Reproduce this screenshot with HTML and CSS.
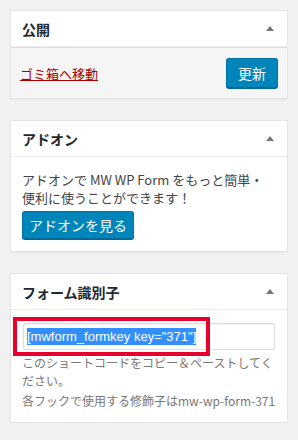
FILE: index.html
```html
<!DOCTYPE html>
<html lang="ja">
<head>
<meta charset="utf-8">
<link rel="stylesheet" href="styles.css">
</head>
<body>
<div class="column">
  <div class="postbox">
    <div class="hndle"><h2>公開</h2><span class="toggle"></span></div>
    <div class="publish-actions">
      <a class="trash" href="#">ゴミ箱へ移動</a>
      <button class="btn btn-update">更新</button>
    </div>
  </div>

  <div class="postbox">
    <div class="hndle"><h2>アドオン</h2><span class="toggle"></span></div>
    <div class="inside">
      <p class="addon-text">アドオンで MW WP Form をもっと簡単・便利に使うことができます！</p>
      <button class="btn btn-addon">アドオンを見る</button>
    </div>
  </div>

  <div class="postbox key-box">
    <div class="hndle"><h2>フォーム識別子</h2><span class="toggle"></span></div>
    <div class="inside">
      <div class="key-input"><span class="selected">[mwform_formkey key="371"]</span></div>
      <p class="desc">このショートコードをコピー＆ペーストしてく<br>ださい。</p>
      <p class="desc desc-last">各フックで使用する修飾子はmw-wp-form-371</p>
    </div>
    <div class="highlight"></div>
  </div>
</div>
</body>
</html>
```

FILE: styles.css
```css
html, body {
  margin: 0;
  padding: 0;
}
body {
  background: #f1f1f1;
  font-family: "Liberation Sans", "Noto Sans CJK JP", sans-serif;
  font-size: 13px;
  color: #444;
}
.column {
  display: flex;
  flex-direction: column;
  gap: 21px;
  padding: 10px 10px 0 10px;
  width: 278px;
}
.postbox {
  position: relative;
  background: #fff;
  border: 1px solid #e5e5e5;
  box-shadow: 0 1px 1px rgba(0,0,0,0.04);
}
.hndle {
  display: flex;
  align-items: center;
  justify-content: space-between;
  height: 35px;
  padding: 0 13px 0 11px;
  border-bottom: 1px solid #eee;
}
.hndle h2 {
  margin: 0;
  font-size: 14px;
  font-weight: 700;
  color: #23282d;
  font-family: "Noto Sans CJK JP", sans-serif;
}
.toggle {
  width: 0;
  height: 0;
  border-left: 4px solid transparent;
  border-right: 4px solid transparent;
  border-bottom: 5px solid #72777c;
}
.publish-actions {
  display: flex;
  align-items: center;
  justify-content: space-between;
  background: #f5f5f5;
  border-top: 1px solid #ddd;
  padding: 10px 9px 10px 9px;
}
.trash {
  color: #a00;
  text-decoration: underline;
  font-family: "Noto Sans CJK JP", sans-serif;
  font-size: 13px;
}
.btn {
  font-family: "Noto Sans CJK JP", sans-serif;
  background: #0085ba;
  border: 1px solid #0073aa;
  border-bottom-color: #006799;
  border-radius: 3px;
  box-shadow: 0 1px 0 #006799;
  color: #fff;
  font-size: 13px;
  padding: 0;
  margin: 0;
  line-height: 1;
  white-space: nowrap;
}
.btn-update {
  width: 52px;
  height: 30px;
  font-size: 14px;
}
.btn-addon {
  width: 112px;
  height: 28px;
  font-size: 14px;
}
.inside {
  padding: 14px 12px 12px 11px;
}
.addon-text {
  margin: 0 0 4px 0;
  line-height: 18px;
  font-family: "Noto Sans CJK JP", sans-serif;
  font-size: 13px;
  color: #444;
}
.key-box .inside {
  padding-top: 13px;
}
.key-input {
  box-sizing: border-box;
  height: 27px;
  width: 252px;
  margin-left: 1px;
  border: 1px solid #ddd;
  border-radius: 2px;
  box-shadow: inset 0 1px 2px rgba(0,0,0,0.07);
  padding: 3px 3px;
  display: flex;
  align-items: center;
}
.selected {
  background: #338fff;
  color: #fff;
  font-family: "Liberation Sans", sans-serif;
  font-size: 13px;
  line-height: 17px;
}
.desc {
  margin: 4px 0 0 0;
  font-family: "Noto Sans CJK JP", sans-serif;
  font-size: 12px;
  line-height: 18px;
  color: #777;
  white-space: nowrap;
}
.desc-last {
  margin-top: 2px;
}
.highlight {
  position: absolute;
  left: 2px;
  top: 43px;
  width: 197px;
  height: 39px;
  box-sizing: border-box;
  border: 4px solid #e8002c;
}
```
